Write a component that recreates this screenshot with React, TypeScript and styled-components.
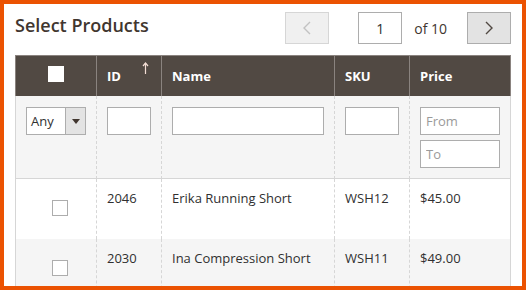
import React from "react";
import styled, { createGlobalStyle } from "styled-components";

const GlobalStyle = createGlobalStyle`
  html, body { margin: 0; padding: 0; background: #ffffff; }
  * { box-sizing: border-box; }
  body { font-family: "Open Sans", "Liberation Sans", sans-serif; }
`;

const Frame = styled.div`
  width: 526px;
  height: 290px;
  overflow: hidden;
  border: 4px solid #eb5202;
  background: #ffffff;
  padding: 8px 11px 0 11px;
  font-family: "Open Sans", "Liberation Sans", sans-serif;
  color: #303030;
`;

const Toolbar = styled.div`
  display: flex;
  justify-content: space-between;
  align-items: flex-start;
  height: 32px;
  margin-bottom: 11px;
`;

const Title = styled.h1`
  margin: 1px 0 0 0;
  font-size: 18px;
  line-height: 24px;
  font-weight: 600;
  color: #41362f;
`;

const Pager = styled.div`
  display: flex;
  align-items: center;
  height: 32px;
`;

const PagerButton = styled.button<{ $enabled?: boolean }>`
  width: 44px;
  height: 32px;
  padding: 0;
  display: flex;
  align-items: center;
  justify-content: center;
  background: ${(p) => (p.$enabled ? "#e3e3e3" : "#f0f0f0")};
  border: 1px solid ${(p) => (p.$enabled ? "#adadad" : "#d6d6d6")};
  color: ${(p) => (p.$enabled ? "#514943" : "#c2c2c2")};
  cursor: pointer;
`;

const PageInput = styled.input`
  width: 44px;
  height: 32px;
  margin-left: 29px;
  border: 1px solid #adadad;
  text-align: center;
  font-family: inherit;
  font-size: 14px;
  color: #303030;
  padding: 0;
  outline: none;
`;

const PageTotal = styled.span`
  margin: 0 20px 0 12px;
  font-size: 14px;
  color: #41362f;
`;

const COLS = "81px 65px 173px 75px 102px";

const Row = styled.div<{ $alt?: boolean }>`
  display: grid;
  grid-template-columns: ${COLS};
  background: ${(p) => (p.$alt ? "#f5f5f5" : "#ffffff")};
`;

type Edge = "first" | "last" | undefined;

const HeadCell = styled.div<{ $edge?: Edge }>`
  position: relative;
  height: 41px;
  background: #514943;
  border-top: 1px solid #8a837f;
  border-left: 1px solid #8a837f;
  border-right: ${(p) => (p.$edge === "last" ? "1px solid #8a837f" : "0")};
  padding: 0 10px;
  display: flex;
  align-items: center;
  justify-content: ${(p) => (p.$edge === "first" ? "center" : "flex-start")};
  color: #ffffff;
  font-size: 13px;
  font-weight: 700;
  line-height: 20px;
`;

const SortArrow = styled.svg`
  position: absolute;
  top: 6px;
  right: 12px;
`;

const FilterCell = styled.div<{ $edge?: Edge }>`
  padding: 11px 10px 10px 10px;
  border-bottom: 1px solid #d6d6d6;
  border-left: 1px ${(p) => (p.$edge === "first" ? "solid" : "dashed")} #d6d6d6;
  border-right: ${(p) => (p.$edge === "last" ? "1px solid #d6d6d6" : "0")};
  display: flex;
  flex-direction: column;
  gap: 5px;
`;

const TextInput = styled.input`
  width: 100%;
  height: 28px;
  border: 1px solid #adadad;
  background: #ffffff;
  padding: 0 5px;
  font-family: inherit;
  font-size: 13px;
  color: #303030;
  outline: none;
  &::placeholder { color: #9a9a9a; }
`;

const SelectBox = styled.div`
  width: 60px;
  height: 28px;
  border: 1px solid #adadad;
  background: #ffffff;
  display: flex;
`;

const SelectValue = styled.span`
  flex: 1;
  padding-left: 4px;
  font-size: 13px;
  line-height: 26px;
  color: #303030;
`;

const SelectArrow = styled.span`
  width: 20px;
  background: #e3e3e3;
  border-left: 1px solid #adadad;
  display: flex;
  align-items: center;
  justify-content: center;
  &::after {
    content: "";
    border-left: 4px solid transparent;
    border-right: 4px solid transparent;
    border-top: 5px solid #41362f;
  }
`;

const BodyCell = styled.div<{ $edge?: Edge }>`
  min-height: 60px;
  padding: 9px 10px 0 10px;
  border-left: 1px ${(p) => (p.$edge === "first" ? "solid" : "dashed")} #d6d6d6;
  border-right: ${(p) => (p.$edge === "last" ? "1px solid #d6d6d6" : "0")};
  font-size: 13px;
  line-height: 20px;
  color: #303030;
`;

const CheckCell = styled(BodyCell)`
  padding: 21px 0 0 36px;
`;

const Checkbox = styled.span<{ $head?: boolean }>`
  display: block;
  width: 16px;
  height: 16px;
  background: #ffffff;
  border: 1px solid ${(p) => (p.$head ? "#ffffff" : "#adadad")};
`;

const HeadCheck = styled(Checkbox)`
  margin-top: -4px;
`;

const Chevron = ({ dir }: { dir: "left" | "right" }) => (
  <svg width="8" height="14" viewBox="0 0 8 14" fill="none">
    <polyline
      points={dir === "left" ? "7,1 1,7 7,13" : "1,1 7,7 1,13"}
      stroke="currentColor"
      strokeWidth="1.4"
    />
  </svg>
);

const rows = [
  { id: "2046", name: "Erika Running Short", sku: "WSH12", price: "$45.00" },
  { id: "2030", name: "Ina Compression Short", sku: "WSH11", price: "$49.00" },
];

export default function App() {
  return (
    <>
      <GlobalStyle />
      <Frame>
        <Toolbar>
          <Title>Select Products</Title>
          <Pager>
            <PagerButton aria-label="Previous">
              <Chevron dir="left" />
            </PagerButton>
            <PageInput defaultValue="1" />
            <PageTotal>of 10</PageTotal>
            <PagerButton $enabled aria-label="Next">
              <Chevron dir="right" />
            </PagerButton>
          </Pager>
        </Toolbar>

        <Row>
          <HeadCell $edge="first">
            <HeadCheck $head />
          </HeadCell>
          <HeadCell>
            ID
            <SortArrow width="7" height="12" viewBox="0 0 7 12" fill="none">
              <line x1="3.5" y1="1" x2="3.5" y2="12" stroke="#f3ded5" strokeWidth="1.2" />
              <polyline points="1,4 3.5,1 6,4" stroke="#f3ded5" strokeWidth="1.2" />
            </SortArrow>
          </HeadCell>
          <HeadCell>Name</HeadCell>
          <HeadCell>SKU</HeadCell>
          <HeadCell $edge="last">Price</HeadCell>
        </Row>

        <Row $alt>
          <FilterCell $edge="first">
            <SelectBox>
              <SelectValue>Any</SelectValue>
              <SelectArrow />
            </SelectBox>
          </FilterCell>
          <FilterCell>
            <TextInput />
          </FilterCell>
          <FilterCell>
            <TextInput />
          </FilterCell>
          <FilterCell>
            <TextInput />
          </FilterCell>
          <FilterCell $edge="last">
            <TextInput placeholder="From" />
            <TextInput placeholder="To" />
          </FilterCell>
        </Row>

        {rows.map((r, i) => (
          <Row key={r.id} $alt={i % 2 === 1}>
            <CheckCell $edge="first">
              <Checkbox />
            </CheckCell>
            <BodyCell>{r.id}</BodyCell>
            <BodyCell>{r.name}</BodyCell>
            <BodyCell>{r.sku}</BodyCell>
            <BodyCell $edge="last">{r.price}</BodyCell>
          </Row>
        ))}
      </Frame>
    </>
  );
}
